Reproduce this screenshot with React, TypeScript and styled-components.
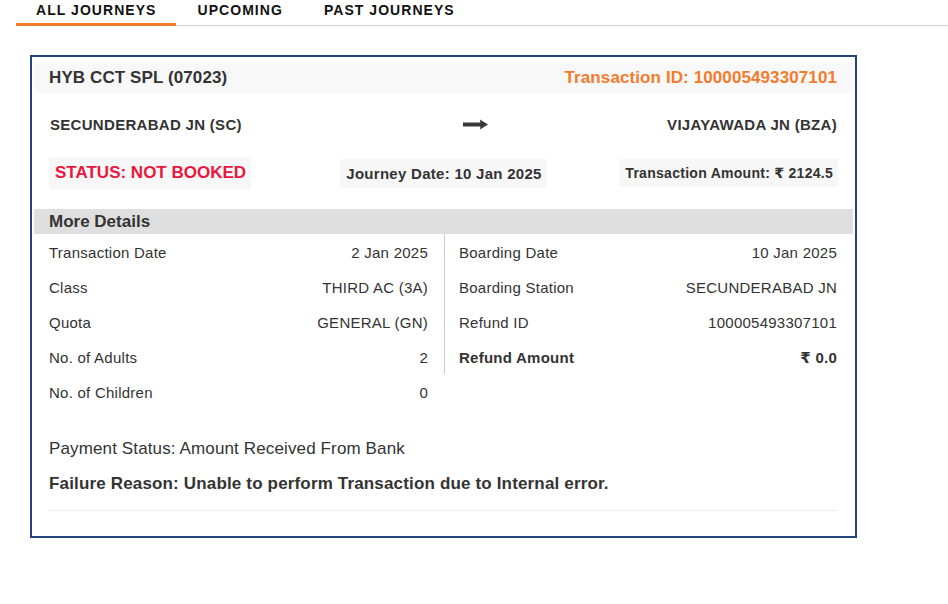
import React from "react";
import styled, { createGlobalStyle } from "styled-components";

const GlobalStyle = createGlobalStyle`
  html, body { margin: 0; padding: 0; background: #ffffff; }
  body {
    font-family: "Liberation Sans", Arial, "DejaVu Sans", sans-serif;
    color: #333333;
  }
  * { box-sizing: border-box; }
`;

const Page = styled.div`
  width: 948px;
  min-height: 604px;
`;

const TabBar = styled.div`
  display: flex;
  margin-left: 16px;
  height: 26px;
  border-bottom: 1px solid #cfcfcf;
`;

const Tab = styled.div<{ $active?: boolean }>`
  padding: 0 20px 0 20px;
  height: 26px;
  line-height: 20px;
  font-size: 14px;
  font-weight: 700;
  letter-spacing: 1.05px;
  color: #111111;
  border-bottom: 3px solid ${(p) => (p.$active ? "#f47b2c" : "transparent")};
  white-space: nowrap;
  & + & {
    padding-left: 21px;
  }
`;

const Card = styled.section`
  width: 827px;
  margin: 29px 0 0 30px;
  border: 2px solid #23437f;
  padding: 6px 2px 25px 2px;
`;

const HeaderBand = styled.div`
  display: flex;
  align-items: center;
  justify-content: space-between;
  height: 30px;
  padding: 0 16px 0 15px;
  background: #f8f8f8;
  font-size: 17px;
  font-weight: 700;
  letter-spacing: 0.1px;
`;

const TrainName = styled.span`
  color: #333333;
`;

const TxnId = styled.span`
  color: #f47b2c;
`;

const RouteRow = styled.div`
  display: grid;
  grid-template-columns: 1fr auto 1fr;
  align-items: center;
  height: 62px;
  padding: 0 16px 0 16px;
`;

const Station = styled.span<{ $align: "start" | "end" }>`
  justify-self: ${(p) => p.$align};
  font-size: 15px;
  font-weight: 700;
  letter-spacing: 0.3px;
  color: #333333;
  white-space: nowrap;
`;

const ArrowWrap = styled.span`
  display: flex;
  margin-left: 64px;
  margin-top: 1px;
`;

const StatusRow = styled.div`
  display: grid;
  grid-template-columns: 1fr 1fr 1fr;
  align-items: center;
  margin-top: 2px;
  padding: 0 15px;
`;

const InfoBox = styled.div<{ $align: "start" | "center" | "end"; $size: number; $color?: string }>`
  justify-self: ${(p) => p.$align};
  background: #f7f7f7;
  padding: 6px 5px 6px 6px;
  font-size: ${(p) => p.$size}px;
  font-weight: 700;
  letter-spacing: ${(p) => (p.$size < 17 ? "0.28px" : "0")};
  color: ${(p) => p.$color || "#333333"};
  white-space: nowrap;
`;

const SectionBand = styled.div`
  margin-top: 20px;
  height: 25px;
  line-height: 25px;
  padding-left: 15px;
  background: #dfdfdf;
  font-size: 17px;
  font-weight: 700;
  color: #333333;
`;

const DetailsGrid = styled.div`
  display: grid;
  grid-template-columns: 410px 1fr;
  align-items: start;
`;

const DetailColumn = styled.div<{ $divider?: boolean }>`
  display: flex;
  flex-direction: column;
  padding: 0 16px 0 ${(p) => (p.$divider ? "14px" : "15px")};
  border-left: ${(p) => (p.$divider ? "1px solid #cccccc" : "none")};
`;

const DetailRow = styled.div<{ $strong?: boolean }>`
  display: flex;
  justify-content: space-between;
  height: 35px;
  padding-top: 3px;
  line-height: 32px;
  font-size: 15px;
  letter-spacing: 0.25px;
  font-weight: ${(p) => (p.$strong ? 700 : 400)};
  color: #333333;
  white-space: nowrap;
`;

const FooterBlock = styled.div`
  padding: 0 15px;
  margin-top: 28px;
`;

const FooterLine = styled.div<{ $strong?: boolean }>`
  line-height: 24px;
  font-size: 17px;
  letter-spacing: ${(p) => (p.$strong ? "0.16px" : "0.13px")};
  font-weight: ${(p) => (p.$strong ? 700 : 400)};
  color: #333333;
  & + & {
    margin-top: 11px;
  }
`;

const Rule = styled.hr`
  margin: 14px 0 0 0;
  border: none;
  border-top: 1px solid #ececec;
`;

const Arrow = () => (
  <svg width="25" height="11" viewBox="0 0 25 11" aria-hidden="true">
    <rect x="0" y="3.5" width="19" height="4" fill="#383838" />
    <path d="M17 0.5 L25 5.5 L17 10.5 Q18.2 5.5 17 0.5 Z" fill="#383838" />
  </svg>
);

const leftDetails: [string, string][] = [
  ["Transaction Date", "2 Jan 2025"],
  ["Class", "THIRD AC (3A)"],
  ["Quota", "GENERAL (GN)"],
  ["No. of Adults", "2"],
  ["No. of Children", "0"],
];

const rightDetails: [string, string, boolean][] = [
  ["Boarding Date", "10 Jan 2025", false],
  ["Boarding Station", "SECUNDERABAD JN", false],
  ["Refund ID", "100005493307101", false],
  ["Refund Amount", "₹ 0.0", true],
];

export default function App() {
  return (
    <Page>
      <GlobalStyle />
      <TabBar>
        <Tab $active>ALL JOURNEYS</Tab>
        <Tab>UPCOMING</Tab>
        <Tab>PAST JOURNEYS</Tab>
      </TabBar>
      <Card>
        <HeaderBand>
          <TrainName>HYB CCT SPL (07023)</TrainName>
          <TxnId>Transaction ID: 100005493307101</TxnId>
        </HeaderBand>
        <RouteRow>
          <Station $align="start">SECUNDERABAD JN (SC)</Station>
          <ArrowWrap>
            <Arrow />
          </ArrowWrap>
          <Station $align="end">VIJAYAWADA JN (BZA)</Station>
        </RouteRow>
        <StatusRow>
          <InfoBox $align="start" $size={17} $color="#e8173f">
            STATUS: NOT BOOKED
          </InfoBox>
          <InfoBox $align="center" $size={15}>
            Journey Date: 10 Jan 2025
          </InfoBox>
          <InfoBox $align="end" $size={14}>
            Transaction Amount: ₹ 2124.5
          </InfoBox>
        </StatusRow>
        <SectionBand>More Details</SectionBand>
        <DetailsGrid>
          <DetailColumn>
            {leftDetails.map(([k, v]) => (
              <DetailRow key={k}>
                <span>{k}</span>
                <span>{v}</span>
              </DetailRow>
            ))}
          </DetailColumn>
          <DetailColumn $divider>
            {rightDetails.map(([k, v, strong]) => (
              <DetailRow key={k} $strong={strong}>
                <span>{k}</span>
                <span>{v}</span>
              </DetailRow>
            ))}
          </DetailColumn>
        </DetailsGrid>
        <FooterBlock>
          <FooterLine>Payment Status: Amount Received From Bank</FooterLine>
          <FooterLine $strong>
            Failure Reason: Unable to perform Transaction due to Internal error.
          </FooterLine>
          <Rule />
        </FooterBlock>
      </Card>
    </Page>
  );
}
